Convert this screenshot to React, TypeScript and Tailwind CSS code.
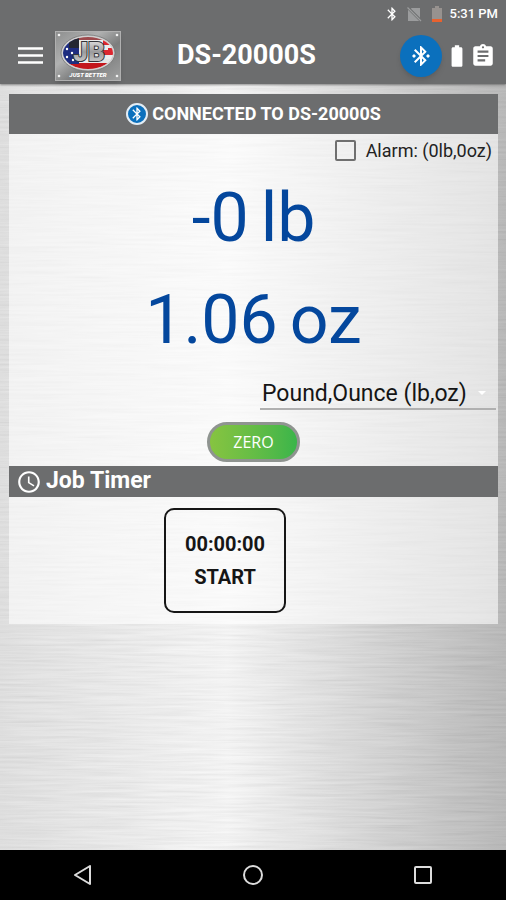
import { useState } from "react";
import {
  MdAccessTime,
  MdAssignment,
  MdBatteryFull,
  MdBluetooth,
  MdBluetoothConnected,
} from "react-icons/md";

const UNITS = ["Pound,Ounce (lb,oz)", "Kilogram (kg)", "Gram (g)", "Ounce (oz)"];

function Logo() {
  return (
    <svg viewBox="0 0 66 50" className="h-[50px] w-[66px] shadow-md" role="img" aria-label="JB Just Better">
      <defs>
        <linearGradient id="plate" x1="0" y1="0" x2="1" y2="1">
          <stop offset="0" stopColor="#8d8e8e" />
          <stop offset="0.35" stopColor="#b0b1b1" />
          <stop offset="0.6" stopColor="#7c7d7d" />
          <stop offset="1" stopColor="#a0a1a1" />
        </linearGradient>
        <linearGradient id="letters" x1="0" y1="0" x2="0" y2="1">
          <stop offset="0" stopColor="#f4f4f4" />
          <stop offset="0.5" stopColor="#9a9a9c" />
          <stop offset="1" stopColor="#dddddd" />
        </linearGradient>
        <clipPath id="oval">
          <ellipse cx="33" cy="22" rx="25" ry="16" />
        </clipPath>
      </defs>
      <rect x="0.5" y="0.5" width="65" height="49" fill="url(#plate)" stroke="#b0b0b0" />
      <ellipse cx="33" cy="22" rx="27" ry="18" fill="#cfcfcf" stroke="#6a6a6a" strokeWidth="0.7" />
      <g clipPath="url(#oval)">
        <rect width="66" height="42" fill="#ececec" />
        <rect y="5" width="66" height="4" fill="#9d4a4d" />
        <rect x="48" y="9" width="18" height="5" fill="#dc2730" />
        <rect x="48" y="19" width="5" height="5" fill="#dc2730" />
        <rect x="53" y="17" width="13" height="7" fill="#dc2730" />
        <rect x="45" y="28" width="21" height="4" fill="#e4e4e4" />
        <rect y="32" width="66" height="7" fill="#c3161c" />
        <rect y="8" width="24" height="25" fill="#1d2c80" />
        <rect x="14" y="7" width="10" height="10" fill="#232733" />
        <circle cx="12" cy="18" r="1.2" fill="#fff" />
        <circle cx="17" cy="22" r="1.2" fill="#fff" />
        <circle cx="12" cy="26" r="1.2" fill="#fff" />
        <circle cx="18" cy="29" r="1.2" fill="#fff" />
      </g>
      <text
        x="34"
        y="30"
        textAnchor="middle"
        fontFamily="Roboto, sans-serif"
        fontSize="26"
        fontWeight="900"
        fill="url(#letters)"
        stroke="#34353a"
        strokeWidth="2"
        paintOrder="stroke"
      >
        JB
      </text>
      <text
        x="33"
        y="46"
        textAnchor="middle"
        fontFamily="Roboto, sans-serif"
        fontSize="6"
        fontWeight="900"
        fontStyle="italic"
        fill="#ffffff"
      >
        JUST BETTER
      </text>
      <circle cx="4" cy="4" r="1.3" fill="#f3f3f3" />
      <circle cx="62" cy="4" r="1.3" fill="#f3f3f3" />
      <circle cx="4" cy="45" r="1.3" fill="#f3f3f3" />
      <circle cx="62" cy="45" r="1.3" fill="#f3f3f3" />
    </svg>
  );
}

function BrushedMetal() {
  return (
    <svg className="absolute inset-0 h-full w-full" aria-hidden="true">
      <defs>
        <filter id="brushed" x="0" y="0" width="100%" height="100%">
          <feTurbulence type="fractalNoise" baseFrequency="0.014 0.4" numOctaves="3" seed="7" />
          <feColorMatrix values="1 0 0 0 0.15  1 0 0 0 0.15  1 0 0 0 0.15  0 0 0 0 1" />
        </filter>
      </defs>
      <rect width="100%" height="100%" filter="url(#brushed)" opacity="0.14" />
    </svg>
  );
}

function StatusBar() {
  return (
    <div className="flex h-[27px] items-center justify-end pr-2 text-white">
      <MdBluetooth className="mr-1.5 size-4" />
      <svg viewBox="0 0 16 16" className="mr-2.5 size-4 text-[#9b9c9d]" aria-hidden="true">
        <path d="M5.5 2H14v9.7L5 2.7zM2 3.7 13.2 15H2z" fill="currentColor" />
        <path d="M1.5 1.5 15 15" stroke="currentColor" strokeWidth="1.2" />
      </svg>
      <svg viewBox="0 0 10 16" className="mr-2 h-4 w-2.5" aria-hidden="true">
        <path d="M3 0h4v2h3v11H0V2h3z" fill="#97928f" />
        <path d="M0 13h10v3H0z" fill="#e8622f" />
      </svg>
      <span className="text-[13px] font-medium">5:31 PM</span>
    </div>
  );
}

export default function App() {
  const [alarm, setAlarm] = useState(false);
  const [unit, setUnit] = useState(UNITS[0]);

  return (
    <div className="flex min-h-screen flex-col bg-black font-[Roboto,sans-serif]">
      <header className="relative z-10 bg-[#6c6d6e] shadow-[0_1px_2px_rgba(0,0,0,0.4)]">
        <StatusBar />
        <div className="flex h-[57px] items-center pr-2.5 pl-[18px] text-white">
          <button type="button" aria-label="Menu">
            <svg viewBox="0 0 25 17" className="h-[17px] w-[25px]" aria-hidden="true">
              <path d="M0 1.5h25M0 8.5h25M0 15.5h25" stroke="currentColor" strokeWidth="2.6" />
            </svg>
          </button>
          <div className="ml-3">
            <Logo />
          </div>
          <h1 className="flex-1 pl-14 text-[27px] font-bold">DS-20000S</h1>
          <button
            type="button"
            aria-label="Bluetooth connection"
            className="flex size-[42px] items-center justify-center rounded-full bg-[#0b70bd] shadow-md"
          >
            <MdBluetoothConnected className="size-6" />
          </button>
          <MdBatteryFull className="ml-0.5 size-[26px]" />
          <button type="button" aria-label="Job log">
            <MdAssignment className="size-[26px]" />
          </button>
        </div>
      </header>

      <main className="relative flex-1 bg-linear-to-r from-[#e0e0e0] via-[#f8f8f8] via-45% to-[#b4b4b4] py-2.5 pr-2 pl-[9px]">
        <BrushedMetal />
        <div className="relative bg-white/60">
          <div className="flex h-10 items-center justify-center gap-1 bg-[#6c6d6e] text-lg font-bold text-white">
            <span className="flex size-[22px] items-center justify-center rounded-full border-2 border-[#e3edf5] bg-[#0b70bd]">
              <MdBluetooth className="size-4" />
            </span>
            CONNECTED TO DS-20000S
          </div>

          <div className="flex h-[33px] items-center justify-end pr-1.5">
            <label className="flex items-center gap-2.5 text-lg text-[#222]">
              <input
                type="checkbox"
                checked={alarm}
                onChange={(e) => setAlarm(e.target.checked)}
                className="size-[21px] appearance-none rounded-xs border-2 border-[#6f6f6f] checked:bg-[#0b70bd]"
              />
              Alarm: (0lb,0oz)
            </label>
          </div>

          <div className="text-center text-[68px] leading-[102px] text-[#04479d]">
            <p className="flex justify-center gap-3">
              <span>-0</span>
              <span>lb</span>
            </p>
            <p className="flex justify-center gap-3">
              <span>1.06</span>
              <span>oz</span>
            </p>
          </div>

          <div className="flex justify-end pt-1 pr-0.5">
            <div className="relative w-[236px] border-b-2 border-[#b0b0b0]">
              <select
                aria-label="Unit"
                value={unit}
                onChange={(e) => setUnit(e.target.value)}
                className="h-[33px] w-full appearance-none pt-0.5 pl-0.5 text-[23px] text-[#151515]"
              >
                {UNITS.map((u) => (
                  <option key={u}>{u}</option>
                ))}
              </select>
              <svg
                viewBox="0 0 8 4"
                className="pointer-events-none absolute top-4 right-2.5 h-1 w-2 text-white"
                aria-hidden="true"
              >
                <path d="M0 0h8L4 4z" fill="currentColor" />
              </svg>
            </div>
          </div>

          <div className="flex justify-center pt-3 pb-1">
            <button
              type="button"
              className="h-10 w-[93px] rounded-full border-3 border-[#8f9490] bg-linear-to-r from-[#86c440] to-[#39b54a] font-['Open_Sans',sans-serif] text-base text-white"
            >
              ZERO
            </button>
          </div>

          <h2 className="flex h-[31px] items-center gap-1 bg-[#6c6d6e] pl-[7px] text-[23px] font-bold text-white">
            <MdAccessTime className="size-[26px]" />
            Job Timer
          </h2>

          <div className="flex py-[11px] pl-[155px]">
            <button
              type="button"
              className="flex h-[105px] w-[122px] flex-col items-center justify-center rounded-[10px] border-2 border-[#161616] text-xl leading-[33px] font-bold text-[#161616]"
            >
              <span>00:00:00</span>
              <span>START</span>
            </button>
          </div>
        </div>
      </main>

      <nav className="flex h-[50px] items-center justify-between bg-black px-[73px] text-[#dcdcdc]">
        <button type="button" aria-label="Back">
          <svg viewBox="0 0 20 20" className="size-5" fill="none" stroke="currentColor" strokeWidth="2">
            <path d="M17 1v18L2 10z" strokeLinejoin="round" />
          </svg>
        </button>
        <button type="button" aria-label="Home">
          <svg viewBox="0 0 20 20" className="size-5" fill="none" stroke="currentColor" strokeWidth="2">
            <circle cx="10" cy="10" r="9" />
          </svg>
        </button>
        <button type="button" aria-label="Recent apps">
          <svg viewBox="0 0 20 20" className="size-5" fill="none" stroke="currentColor" strokeWidth="2">
            <rect x="2" y="2" width="16" height="16" rx="1" />
          </svg>
        </button>
      </nav>
    </div>
  );
}
